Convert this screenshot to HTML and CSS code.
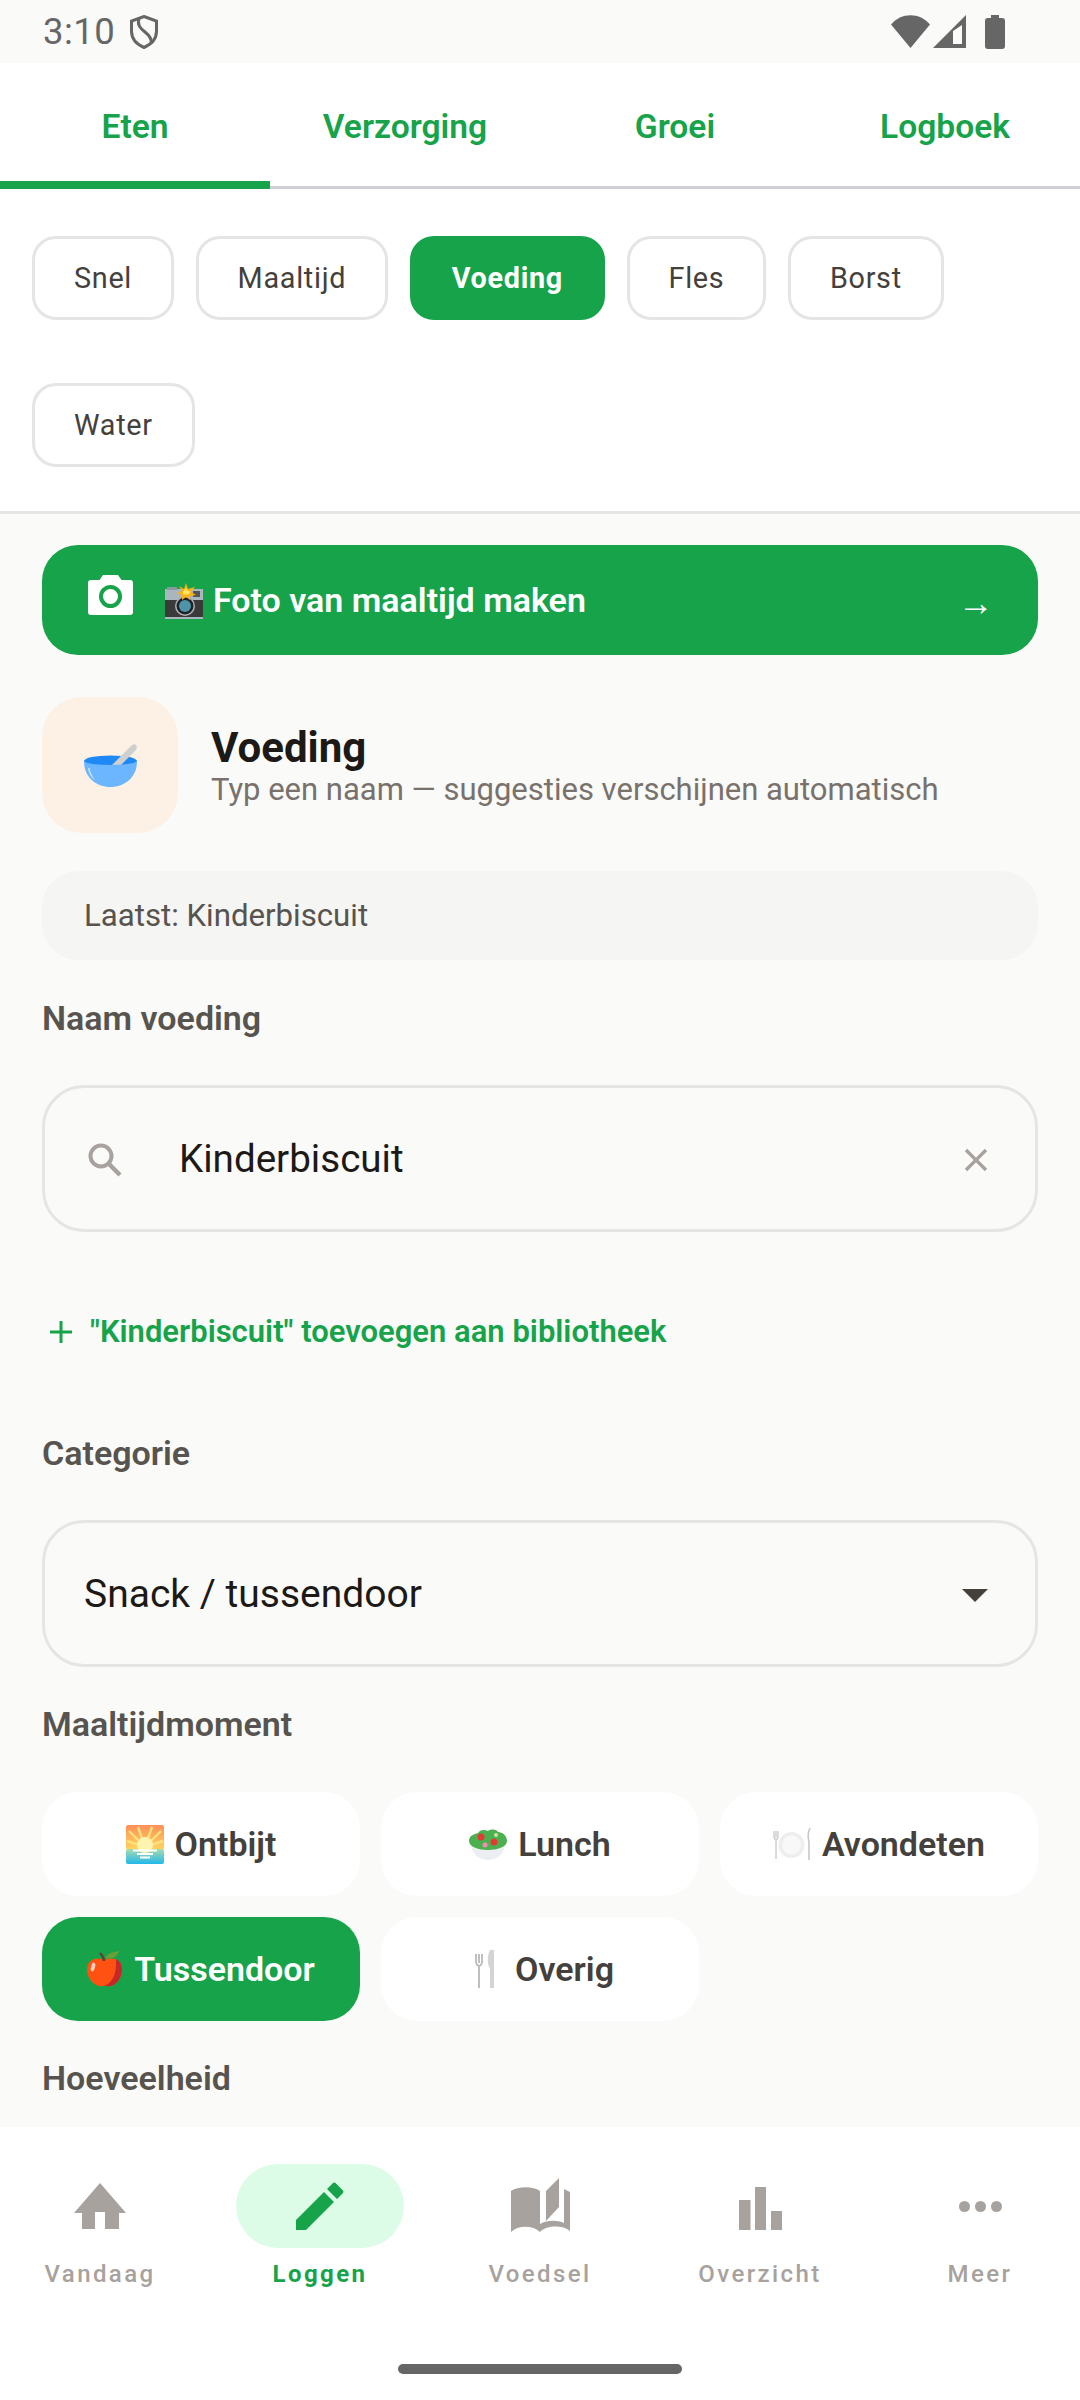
FILE: index.html
```html
<!DOCTYPE html>
<html lang="nl">
<head>
<meta charset="utf-8">
<title>Loggen</title>
<link rel="stylesheet" href="styles.css">
</head>
<body>
<div class="app">
  <div class="status">
    <div class="status-left">
      <span class="clock">3:10</span>
      <svg class="shield" viewBox="0 0 28 34"><path d="M14 1.500 L26.500 6 V16 C26.500 24 21 29.500 14 32.500 C7 29.500 1.500 24 1.500 16 V6 Z" fill="none" stroke="#666" stroke-width="3"/><path d="M9 3 C7 10 10 13 15 17 C20 21 22 24 21 28" fill="none" stroke="#666" stroke-width="3"/></svg>
    </div>
    <div class="status-right">
      <svg class="wifi" viewBox="0 0 39 33"><path d="M0 9.500 C10 -3 29 -3 39 9.500 L19.500 33 Z" fill="#666"/></svg>
      <svg class="signal" viewBox="0 0 33 33"><path fill-rule="evenodd" d="M33 0 V33 H0 Z M29 10 L20 16 V29 H29 Z" fill="#666"/></svg>
      <svg class="battery" viewBox="0 0 20 34"><path d="M6 0 H14 V3 H17 Q20 3 20 6 V31 Q20 34 17 34 H3 Q0 34 0 31 V6 Q0 3 3 3 H6 Z" fill="#666"/></svg>
    </div>
  </div>

  <nav class="tabs">
    <a class="tab tab-active">Eten</a>
    <a class="tab">Verzorging</a>
    <a class="tab">Groei</a>
    <a class="tab">Logboek</a>
  </nav>

  <div class="chips">
    <span class="chip">Snel</span>
    <span class="chip">Maaltijd</span>
    <span class="chip chip-active">Voeding</span>
    <span class="chip">Fles</span>
    <span class="chip">Borst</span>
    <span class="chip">Water</span>
  </div>

  <main class="content">
    <div class="photo-btn">
      <svg class="cam" viewBox="0 0 45 40"><path d="M15 0 H30 L33.500 5 H42 Q45 5 45 8 V37 Q45 40 42 40 H3 Q0 40 0 37 V8 Q0 5 3 5 H11.500 Z" fill="#fff"/><circle cx="22.500" cy="21.500" r="9.500" fill="none" stroke="#16a34a" stroke-width="4"/></svg>
      <svg class="emo-flash" viewBox="0 0 38 36">
        <rect x="0" y="6" width="38" height="30" fill="#3a3a3a"/>
        <rect x="0" y="6" width="38" height="11" fill="#a9b6bd"/>
        <rect x="2" y="4" width="10" height="3" fill="#8a979e"/>
        <rect x="28" y="8" width="7" height="6" fill="#555"/>
        <rect x="0" y="34" width="38" height="2" fill="#a9b6bd"/>
        <circle cx="20" cy="23" r="10" fill="#b0b0b0"/>
        <circle cx="20" cy="23" r="8.500" fill="#1d2226"/>
        <circle cx="20" cy="23" r="6" fill="#4e93a8"/>
        <path d="M21 0 L23 6 L30 4 L26 9 L31 12 L25 13 L25 17 L21 14 L17 17 L17 12 L12 10 L17 8 L14 3 L19 6 Z" fill="#fbb015"/>
        <path d="M21 5 L23 8 L26 8.500 L24 11 L21 12 L18 11 L18 8.500 Z" fill="#ffe45c"/>
      </svg>
      <span class="photo-text">Foto van maaltijd maken</span>
      <span class="arrow">→</span>
    </div>

    <div class="head">
      <div class="head-icon">
        <svg class="bowl" viewBox="0 0 53 44">
          <ellipse cx="26.500" cy="18" rx="26.500" ry="5.500" fill="#1e88f5"/>
          <path d="M28 22 L47 3 Q50 0 52 2 Q54 5 51 8 L37 22 Z" fill="#cfcfcf"/>
          <path d="M0 18.500 C6 23 47 23 53 18.500 C53 34 41 44 26.500 44 C12 44 0 34 0 18.500 Z" fill="#6cb6ff"/>
          <path d="M4 25 C5 31 8 35 11 37 C8 33 6 29 5.500 25 Z" fill="#cfe6ff"/>
        </svg>
      </div>
      <div class="head-text">
        <div class="title">Voeding</div>
        <div class="subtitle">Typ een naam — suggesties verschijnen automatisch</div>
      </div>
    </div>

    <div class="last">Laatst: Kinderbiscuit</div>

    <div class="label label-name">Naam voeding</div>
    <div class="field field-search">
      <svg class="search" viewBox="0 0 34 34"><circle cx="13" cy="13" r="10.500" fill="none" stroke="#a8a29e" stroke-width="4"/><path d="M20.500 20.500 L32 32" stroke="#a8a29e" stroke-width="4.400"/></svg>
      <span class="field-text">Kinderbiscuit</span>
      <svg class="clear" viewBox="0 0 24 24"><path d="M2 2 L22 22 M22 2 L2 22" stroke="#a8a29e" stroke-width="3.200"/></svg>
    </div>

    <div class="add">
      <svg class="plus" viewBox="0 0 22 22"><path d="M11 0 V22 M0 11 H22" stroke="#16a34a" stroke-width="3"/></svg>
      <span>"Kinderbiscuit" toevoegen aan bibliotheek</span>
    </div>

    <div class="label label-cat">Categorie</div>
    <div class="field field-select">
      <span class="select-text">Snack / tussendoor</span>
      <svg class="caret" viewBox="0 0 26 13"><path d="M0 0 H26 L13 13 Z" fill="#44403c"/></svg>
    </div>

    <div class="label label-moment">Maaltijdmoment</div>
    <div class="moments">
      <div class="moment">
        <svg class="emo" viewBox="0 0 38 39">
          <defs><linearGradient id="sky" x1="0" y1="0" x2="0" y2="1"><stop offset="0" stop-color="#ff8f5a"/><stop offset="1" stop-color="#ffd75e"/></linearGradient><linearGradient id="sea" x1="0" y1="0" x2="0" y2="1"><stop offset="0" stop-color="#a8dcae"/><stop offset="1" stop-color="#22b8ea"/></linearGradient></defs>
          <rect width="38" height="25" rx="2" fill="url(#sky)"/>
          <rect y="24" width="38" height="15" rx="2" fill="url(#sea)"/>
          <path d="M19 22 L3 6 M19 22 L12 2 M19 22 L26 2 M19 22 L35 6 M19 22 L1 16 M19 22 L37 16" stroke="#ffe27a" stroke-width="2.400"/>
          <circle cx="19" cy="20" r="8" fill="#fff3b0"/>
          <path d="M7 25.500 H31 M11 29 H27 M14 32.500 H24" stroke="#fff" stroke-width="2"/>
        </svg>
        <span>Ontbijt</span>
      </div>
      <div class="moment">
        <svg class="emo emo-salad" viewBox="0 0 38 31">
          <path d="M2 14 H36 C36 24 29 31 19 31 C9 31 2 24 2 14 Z" fill="#eceff1"/>
          <path d="M0 12 C0 6 6 5 9 4 C12 0 16 1 19 2 C22 0 27 0 29 3 C34 3 38 7 38 12 C38 18 28 21 19 21 C10 21 0 18 0 12 Z" fill="#4caf50"/>
          <circle cx="12" cy="8" r="3.500" fill="#e53935"/>
          <circle cx="25" cy="13" r="3.500" fill="#e53935"/>
          <circle cx="16" cy="16" r="2.500" fill="#f48fb1"/>
          <circle cx="27" cy="6" r="2" fill="#c5e1a5"/>
        </svg>
        <span>Lunch</span>
      </div>
      <div class="moment">
        <svg class="emo emo-plate" viewBox="0 0 38 32">
          <path d="M1 3 V10 M3 3 V10 M5 3 V10 M1 10 Q3 14 5 10 M3 12 V31" fill="none" stroke="#c4c4c4" stroke-width="1.200"/>
          <circle cx="18.500" cy="17" r="13" fill="#eeeeee"/>
          <circle cx="18.500" cy="17" r="9.500" fill="#f8f8f8"/>
          <path d="M37 0 C35 4 35 10 36 14 V32" fill="none" stroke="#c8c8c8" stroke-width="1.600"/>
        </svg>
        <span>Avondeten</span>
      </div>
      <div class="moment moment-active">
        <svg class="emo emo-apple" viewBox="0 0 36 36">
          <path d="M18 9 C24 6 35 7 35 19 C35 29 26 37 20 35 C18 34.500 18 34.500 16 35 C10 37 0 29 0 19 C0 7 12 6 18 9 Z" fill="#ff5212"/>
          <path d="M35 19 C35 29 26 37 20 35 C18 34.500 18 34.500 16 35 C24 33 30 26 29 8 C33 10 35 14 35 19 Z" fill="#c62828"/>
          <path d="M17 10 C17 6 15 4 13 2" fill="none" stroke="#5d4037" stroke-width="2.400"/>
          <path d="M18 7 C20 3 25 1 32 0 C30 6 25 9 18 7 Z" fill="#689f38"/>
          <ellipse cx="6" cy="16" rx="2" ry="4.500" fill="#ffccbc" transform="rotate(15 6 16)"/>
        </svg>
        <span>Tussendoor</span>
      </div>
      <div class="moment">
        <svg class="emo" viewBox="0 0 38 39">
          <path d="M10 4 V13 M13 4 V13 M16 4 V13 M10 13 Q13 19 16 13 M13 16 V38" fill="none" stroke="#b8b8b8" stroke-width="1.800"/>
          <path d="M24 0 C21 5 21 14 24 19 V38 H28 V0 Z" fill="#d4d4d4"/>
        </svg>
        <span>Overig</span>
      </div>
    </div>

    <div class="label label-qty">Hoeveelheid</div>
  </main>

  <footer class="bottom">
    <div class="nav">
      <div class="nav-item">
        <div class="nav-icon">
          <svg class="i-home" viewBox="0 0 52 46"><path d="M26 0 L52 30 H45 V46 H31 V29 H21 V46 H8 V30 H0 Z" fill="#a8a29e"/></svg>
        </div>
        <span class="nav-label">Vandaag</span>
      </div>
      <div class="nav-item nav-item-active">
        <div class="nav-icon nav-icon-active">
          <svg class="i-pen" viewBox="0 0 48 48"><path d="M0 38 L28 10 L38 20 L10 48 H0 Z M31 7 L37 1 Q38 0 39.500 1 L47 8.500 Q48 10 47 11 L41 17 Z" fill="#16a34a"/></svg>
        </div>
        <span class="nav-label">Loggen</span>
      </div>
      <div class="nav-item">
        <div class="nav-icon">
          <svg class="i-book" viewBox="0 0 59 54"><path d="M0 13 C7 8 22 8 29 13 V46 C36 42 46 42 53 45 V11 L59 14 V53 C52 47 36 47 29 54 C22 47 7 47 0 54 Z" fill="#a8a29e"/><path d="M48 0 V29 L35 43 V13 Z" fill="#a8a29e"/></svg>
        </div>
        <span class="nav-label">Voedsel</span>
      </div>
      <div class="nav-item">
        <div class="nav-icon">
          <svg class="i-bars" viewBox="0 0 43 43"><path d="M0 13 H11.500 V43 H0 Z M16 0 H27 V43 H16 Z M32 24 H43 V43 H32 Z" fill="#a8a29e"/></svg>
        </div>
        <span class="nav-label">Overzicht</span>
      </div>
      <div class="nav-item">
        <div class="nav-icon">
          <svg class="i-more" viewBox="0 0 43 11"><circle cx="5.500" cy="5.500" r="5.500" fill="#a8a29e"/><circle cx="21.500" cy="5.500" r="5.500" fill="#a8a29e"/><circle cx="37.500" cy="5.500" r="5.500" fill="#a8a29e"/></svg>
        </div>
        <span class="nav-label">Meer</span>
      </div>
    </div>
    <div class="home-wrap"><div class="home-bar"></div></div>
  </footer>
</div>
</body>
</html>
```
FILE: styles.css
```css
* { box-sizing: border-box; }
html, body { margin: 0; padding: 0; }
body { font-family: Roboto, "Noto Sans", sans-serif; background: #fafaf8; }
.app { width: 1080px; height: 2400px; display: flex; flex-direction: column; overflow: hidden; background: #fafaf8; }

.status { height: 63px; flex: none; display: flex; justify-content: space-between; align-items: center; padding: 0 75px 0 43px; background: #fafaf8; color: #666; }
.status-left { display: flex; align-items: center; gap: 15px; }
.clock { font-size: 36.5px; font-weight: 400; letter-spacing: .5px; }
.shield { width: 28px; height: 34px; }
.status-right { display: flex; align-items: center; }
.wifi { width: 39px; height: 33px; }
.signal { width: 33px; height: 33px; margin-left: 3px; }
.battery { width: 20px; height: 34px; margin-left: 19px; }

.tabs { height: 126px; flex: none; display: flex; background: #fff; border-bottom: 3px solid #d1cfd6; }
.tab { flex: 1; height: 126px; display: flex; align-items: center; justify-content: center; color: #16a34a; font-size: 33.6px; font-weight: 600; }
.tab-active { box-shadow: inset 0 -8px 0 #16a34a; }

.chips { flex: none; height: 325px; background: #fff; border-bottom: 3px solid #e7e5e4; padding: 47px 32px 0; display: flex; flex-wrap: wrap; align-content: flex-start; column-gap: 21.5px; row-gap: 63px; }
.chip { height: 84px; display: flex; align-items: center; padding: 0 39px; border: 3px solid #e7e5e4; border-radius: 24px; background: #fff; color: #44403c; font-size: 28.8px; font-weight: 400; letter-spacing: .7px; }
.chip-active { background: #16a34a; border-color: #16a34a; color: #fff; font-weight: 700; }

.content { flex: 1; min-height: 0; overflow: hidden; padding: 31px 42px 0; background: #fafaf8; }

.photo-btn { height: 110px; border-radius: 36px; background: #16a34a; display: flex; align-items: center; padding: 0 44px 0 46px; color: #fff; font-size: 34px; font-weight: 600; }
.cam { width: 45px; height: 40px; margin-bottom: 10px; flex: none; }
.emo-flash { width: 38px; height: 36px; margin-left: 32px; flex: none; margin-top: 2px; }
.photo-text { margin-left: 10px; flex: 1; }
.arrow { font-size: 36px; line-height: 36px; margin-top: 6px; }

.head { display: flex; align-items: center; gap: 33px; margin-top: 42px; }
.head-icon { width: 136px; height: 136px; border-radius: 40px; background: #fdf0e4; display: flex; align-items: center; justify-content: center; flex: none; }
.bowl { width: 53px; height: 44px; margin-top: 0; }
.head-text { display: flex; flex-direction: column; padding-top: 4px; }
.title { font-size: 42px; font-weight: 700; color: #1c1917; line-height: 46px; }
.subtitle { font-size: 31px; color: #78716c; line-height: 38px; }

.last { height: 89px; margin-top: 38px; border-radius: 36px; background: #f5f5f4; display: flex; align-items: center; padding: 0 42px; color: #57534e; font-size: 31.2px; }

.label { font-size: 34px; font-weight: 600; color: #57534e; line-height: 36px; }
.label-name { margin-top: 40px; }
.label-cat { margin-top: 85px; }
.label-moment { margin-top: 39px; }
.label-qty { margin-top: 39px; }

.field { height: 147px; border: 3px solid #e7e5e4; border-radius: 42px; display: flex; align-items: center; }
.field-search { margin-top: 49px; padding: 0 47px 0 43px; }
.search { width: 34px; height: 34px; flex: none; margin-top: 2px; }
.field-text { flex: 1; margin-left: 57px; font-size: 38.6px; color: #1c1917; }
.clear { width: 24px; height: 24px; flex: none; margin-top: 2px; }

.add { display: flex; align-items: center; gap: 18px; margin-top: 82px; padding-left: 8px; color: #16a34a; font-size: 31px; font-weight: 600; line-height: 36px; }
.plus { width: 22px; height: 22px; flex: none; }

.field-select { margin-top: 49px; padding: 0 47px 0 39px; justify-content: space-between; }
.select-text { font-size: 39px; color: #1c1917; }
.caret { width: 26px; height: 13px; margin-top: 3px; }

.moments { display: grid; grid-template-columns: repeat(3, 318px); gap: 21px; margin-top: 50px; }
.moment { height: 104px; border-radius: 36px; background: #fff; color: #44403c; font-size: 34px; font-weight: 600; display: flex; align-items: center; justify-content: center; gap: 11px; }
.moment-active { background: #16a34a; color: #fff; }
.emo { flex: none; width: 38px; height: 39px; }
.emo-salad { height: 31px; }
.emo-plate { height: 32px; }
.emo-apple { width: 36px; height: 36px; }

.bottom { height: 273px; flex: none; background: #fff; display: flex; flex-direction: column; }
.nav { display: flex; justify-content: center; gap: 52px; padding-top: 37px; }
.nav-item { width: 168px; display: flex; flex-direction: column; align-items: center; color: #a8a29e; }
.nav-icon { width: 168px; height: 84px; border-radius: 42px; display: flex; align-items: center; justify-content: center; }
.nav-icon-active { background: #dcfce7; }
.nav-label { font-size: 24px; font-weight: 500; letter-spacing: 2.4px; line-height: 28px; margin-top: 12px; }
.nav-item-active { color: #16a34a; }
.nav-item-active .nav-label { font-weight: 700; }
.i-home { width: 52px; height: 46px; }
.i-pen { width: 48px; height: 48px; }
.i-book { width: 59px; height: 54px; margin-bottom: 3px; }
.i-bars { width: 43px; height: 43px; margin-top: 4px; }
.i-more { width: 43px; height: 11px; }

.home-wrap { flex: 1; display: flex; justify-content: center; padding-top: 76px; }
.home-bar { width: 284px; height: 10px; border-radius: 5px; background: #666; }
```
